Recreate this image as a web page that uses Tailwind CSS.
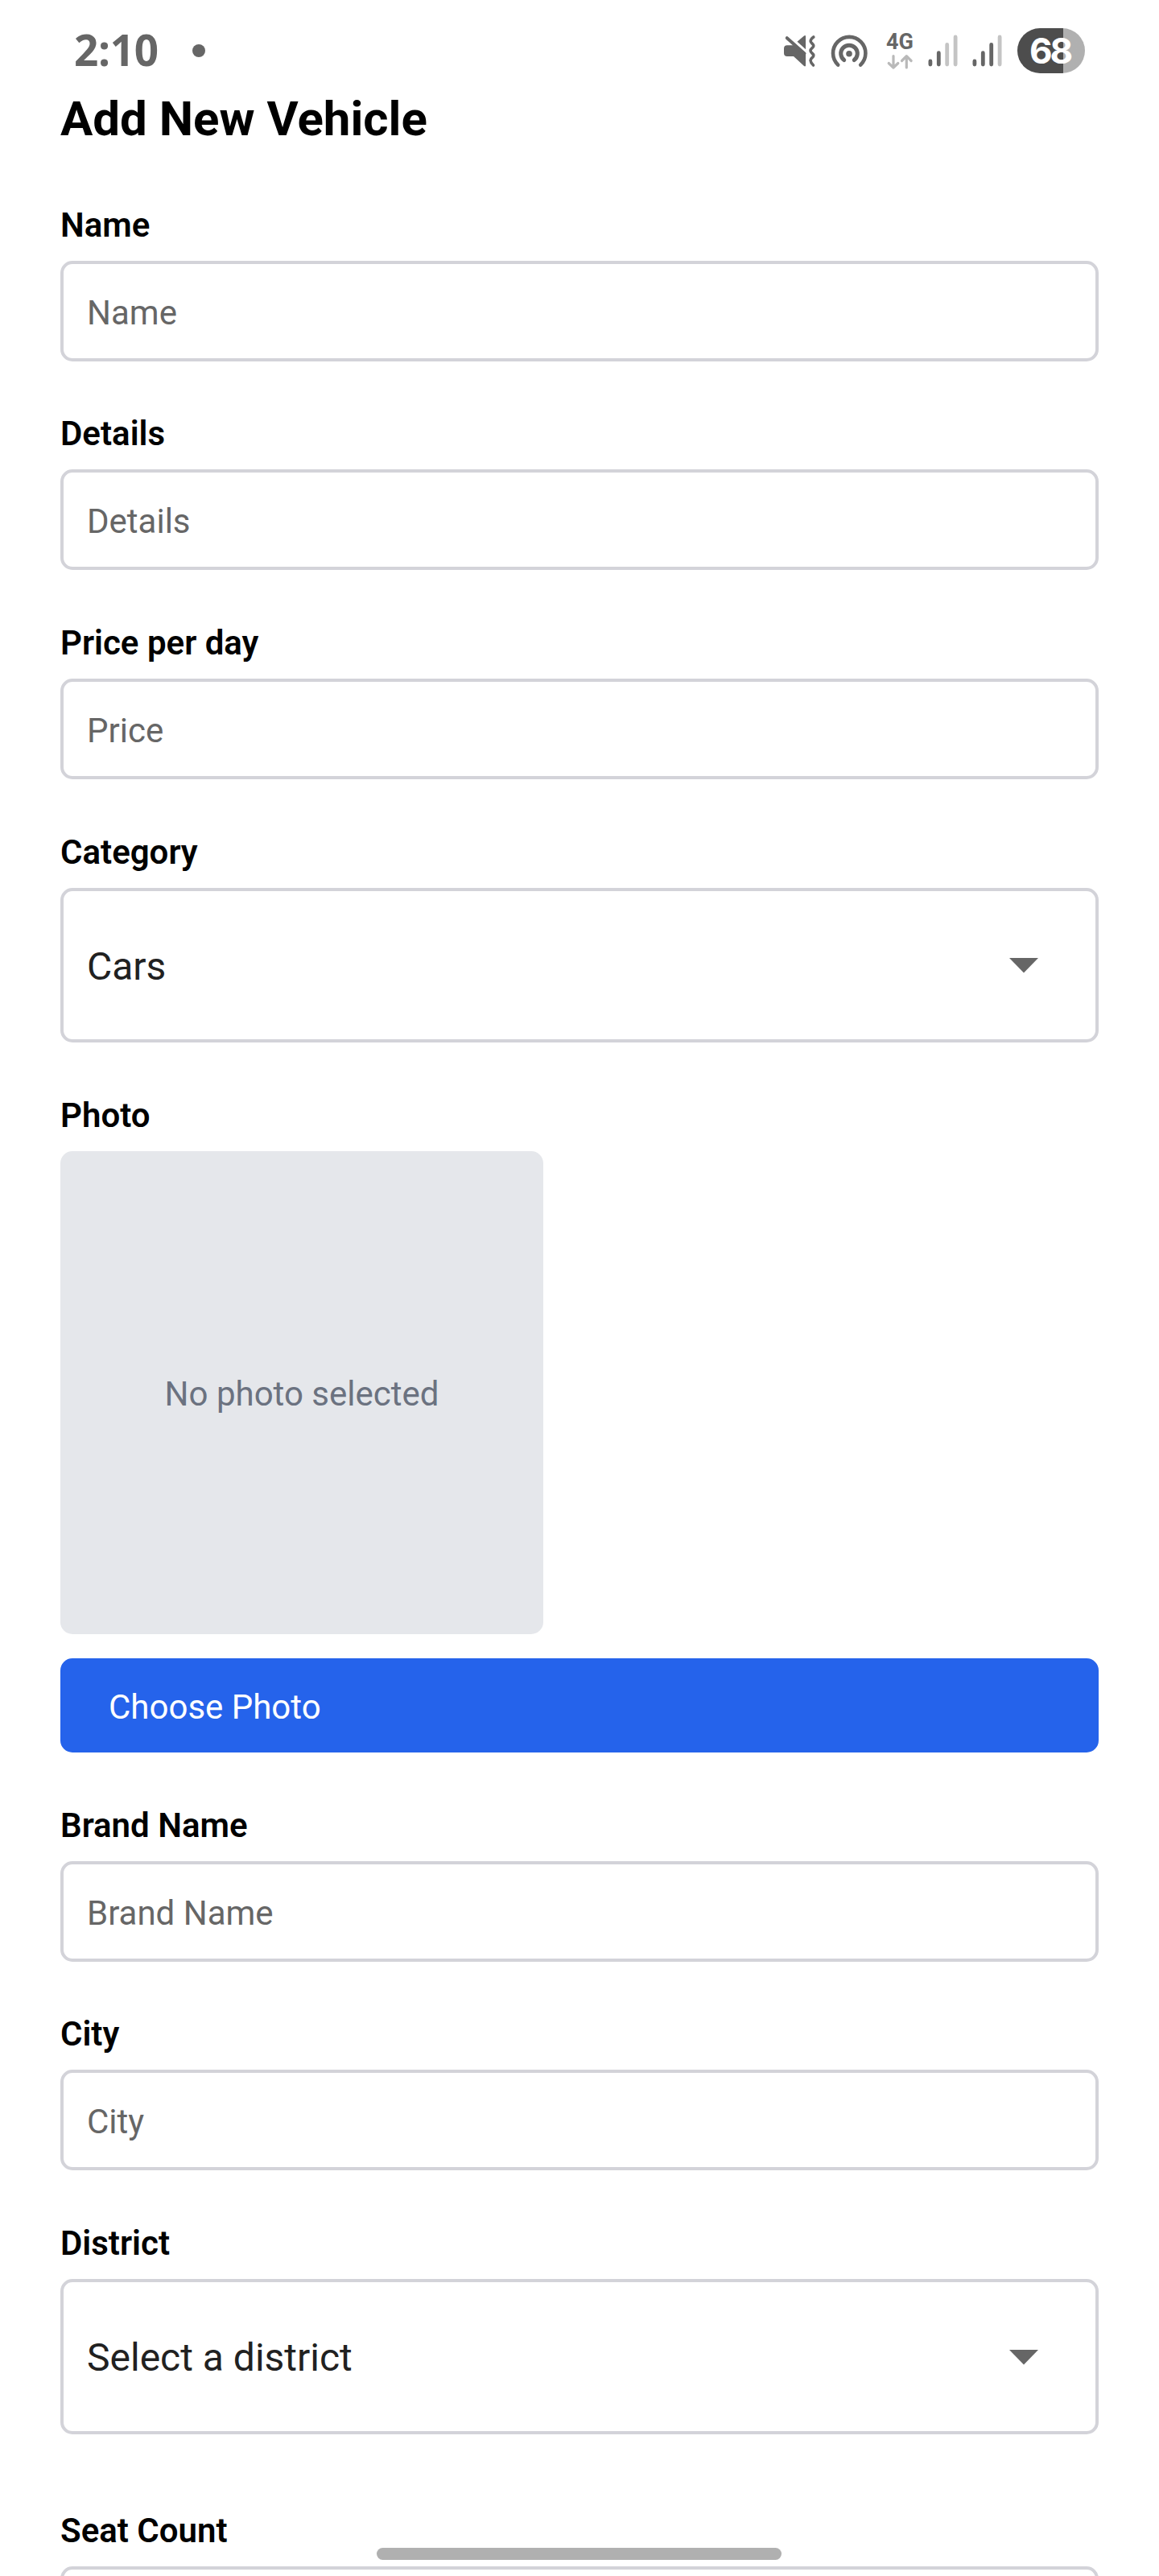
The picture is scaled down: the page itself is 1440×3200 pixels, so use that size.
<!DOCTYPE html>
<html lang="en">
<head>
<meta charset="utf-8">
<title>Add New Vehicle</title>
<script src="https://cdn.jsdelivr.net/npm/@tailwindcss/browser@4"></script>
</head>
<body class="bg-white">
<div class="relative w-[1440px] h-[3200px] overflow-hidden bg-white text-black font-[Roboto,sans-serif]">

  <!-- Status bar -->
  <header class="flex h-[105px] pl-[92px] pr-[92px] pt-[31px] text-[#666666]">
    <span class="mt-px w-[105px] whitespace-nowrap font-['Open_Sans',sans-serif] text-[53px] leading-[60px] font-bold tracking-[-0.3px]">2:10</span>
    <span class="ml-[42px] mt-[24px] size-4 rounded-full bg-[#666666]"></span>
    <div class="ml-auto flex items-start">
      <!-- Muted, vibrate -->
      <svg class="mt-[9px] h-[50px] w-[44px]" viewBox="972 40 44 50" fill="none">
        <path d="M979 56.3H988L1002 67.5V81.5Q1001.5 83 1000 82L987 70H979Q975 70 975 66V60.3Q975 56.3 979 56.3Z" fill="#666"/>
        <path d="M978.8 47.2L1000.5 66.5" stroke="#666" stroke-width="4" stroke-linecap="round"/>
        <path d="M991.5 51.8L1000 44.6Q1002 43.2 1002 45.5V61.2Z" fill="#666"/>
        <path d="M1011.8 46Q1007.8 49 1008.2 51.5C1008.5 53.5 1011.8 54.5 1011.8 57S1008 60 1008 63S1011.8 66 1011.8 69S1008 71.5 1008 75Q1008.2 78 1011.5 81" stroke="#666" stroke-width="3.6" stroke-linecap="round"/>
      </svg>
      <!-- Hotspot -->
      <svg class="ml-[14px] mt-[9px] h-[50px] w-[52px]" viewBox="1030 40 52 50" fill="none" stroke="#666" stroke-linecap="round">
        <path d="M1042.2 80.6A20.2 20.2 0 1 1 1070.2 80.6" stroke-width="4.6"/>
        <path d="M1049.7 74.6A10.3 10.3 0 1 1 1062.3 74.6" stroke-width="5"/>
        <circle cx="1056" cy="66.7" r="3.8" fill="#666" stroke="none"/>
      </svg>
      <!-- Network type -->
      <div class="ml-[19px] mt-[7px] flex w-[36px] flex-col">
        <span class="pl-px text-[27px] leading-[28px] font-bold">4G</span>
        <svg class="mt-px h-[20px] w-[36px]" viewBox="1100 66 36 20" fill="none" stroke="#b9b9b9" stroke-width="3.2" stroke-linecap="round" stroke-linejoin="round">
          <path d="M1110 68.5V83M1104.2 77.5L1110 83.2L1115.800 77.5"/>
          <path d="M1126.3 83V68.5M1120.5 74.5L1126.3 68.7L1132.1 74.5"/>
        </svg>
      </div>
      <!-- Signal, SIM 1 -->
      <svg class="ml-[14px] mt-[9px] h-[50px] w-[44px]" viewBox="1150 40 44 50" stroke-width="4.8" stroke-linecap="round">
        <path d="M1155.9 76V80M1166.3 65.7V80" stroke="#666"/>
        <path d="M1176.7 55.5V80M1187.1 46V80" stroke="#c4c4c4"/>
      </svg>
      <!-- Signal, SIM 2 -->
      <svg class="ml-[11px] mt-[9px] h-[50px] w-[44px]" viewBox="1205 40 44 50" stroke-width="4.8" stroke-linecap="round">
        <path d="M1210.9 76V80M1221.3 65.7V80M1231.7 55.5V80" stroke="#666"/>
        <path d="M1242.1 46V80" stroke="#c4c4c4"/>
      </svg>
      <!-- Battery -->
      <div class="ml-[15px] mt-[4px] flex h-[56px] w-[84px] items-center justify-center rounded-full bg-linear-to-r from-[#4d4d4d] from-68% to-[#b0b0b0] to-68% pr-[3px] font-[Inter,sans-serif] text-[44px] leading-[56px] font-bold tracking-[-3px] text-white">68</div>
    </div>
  </header>

  <!-- Form -->
  <main class="flex flex-col px-[75px]">
    <h1 class="text-[60px] leading-[86px] font-bold">Add New Vehicle</h1>

    <section class="mt-[58px] flex flex-col gap-[13px]">
      <label class="text-[42px] leading-[62px] font-semibold">Name</label>
      <div class="flex h-[125px] items-center rounded-[15px] border-4 border-[#d3d3d9] px-[29px] pt-[4px] text-[42px] text-[#666666]">Name</div>
    </section>

    <section class="mt-[59px] flex flex-col gap-[13px]">
      <label class="text-[42px] leading-[62px] font-semibold">Details</label>
      <div class="flex h-[125px] items-center rounded-[15px] border-4 border-[#d3d3d9] px-[29px] pt-[4px] text-[42px] text-[#666666]">Details</div>
    </section>

    <section class="mt-[60px] flex flex-col gap-[13px]">
      <label class="text-[42px] leading-[62px] font-semibold">Price per day</label>
      <div class="flex h-[125px] items-center rounded-[15px] border-4 border-[#d3d3d9] px-[29px] pt-[4px] text-[42px] text-[#666666]">Price</div>
    </section>

    <section class="mt-[60px] flex flex-col gap-[13px]">
      <label class="text-[42px] leading-[62px] font-semibold">Category</label>
      <div class="flex h-[192px] items-center justify-between rounded-[15px] border-4 border-[#d3d3d9] pl-[29px] pr-[71px] text-[48px] text-[#212121]">
        <span class="pt-[3px]">Cars</span>
        <svg class="mt-px h-[19px] w-[36px]" viewBox="0 0 36 19"><path d="M0 0H36L18 18.5Z" fill="#666"/></svg>
      </div>
    </section>

    <section class="mt-[60px] flex flex-col">
      <label class="text-[42px] leading-[62px] font-semibold">Photo</label>
      <div class="mt-[13px] flex size-[600px] items-center justify-center rounded-[15px] bg-[#e5e7eb] pt-[2px] text-[42px] text-[#6b7280]">No photo selected</div>
      <button class="mt-[30px] flex h-[117px] items-center rounded-[15px] bg-[#2563eb] px-[60px] pt-[3px] text-[42px] text-white">Choose Photo</button>
    </section>

    <section class="mt-[60px] flex flex-col gap-[13px]">
      <label class="text-[42px] leading-[62px] font-semibold">Brand Name</label>
      <div class="flex h-[125px] items-center rounded-[15px] border-4 border-[#d3d3d9] px-[29px] pt-[4px] text-[42px] text-[#666666]">Brand Name</div>
    </section>

    <section class="mt-[59px] flex flex-col gap-[13px]">
      <label class="text-[42px] leading-[62px] font-semibold">City</label>
      <div class="flex h-[125px] items-center rounded-[15px] border-4 border-[#d3d3d9] px-[29px] pt-[4px] text-[42px] text-[#666666]">City</div>
    </section>

    <section class="mt-[60px] flex flex-col gap-[13px]">
      <label class="text-[42px] leading-[62px] font-semibold">District</label>
      <div class="flex h-[193px] items-center justify-between rounded-[15px] border-4 border-[#d3d3d9] pl-[29px] pr-[71px] text-[48px] text-[#212121]">
        <span class="pt-[3px]">Select a district</span>
        <svg class="mt-px h-[19px] w-[36px]" viewBox="0 0 36 19"><path d="M0 0H36L18 18.5Z" fill="#666"/></svg>
      </div>
    </section>

    <section class="mt-[89px] flex flex-col gap-[13px]">
      <label class="text-[42px] leading-[62px] font-semibold">Seat Count</label>
      <div class="h-[125px] rounded-[15px] border-4 border-[#d3d3d9]"></div>
    </section>
  </main>

  <!-- System gesture handle -->
  <div class="absolute bottom-[20px] left-[468px] h-[15px] w-[503px] rounded-full bg-[#b0b0b0]"></div>
</div>
</body>
</html>
